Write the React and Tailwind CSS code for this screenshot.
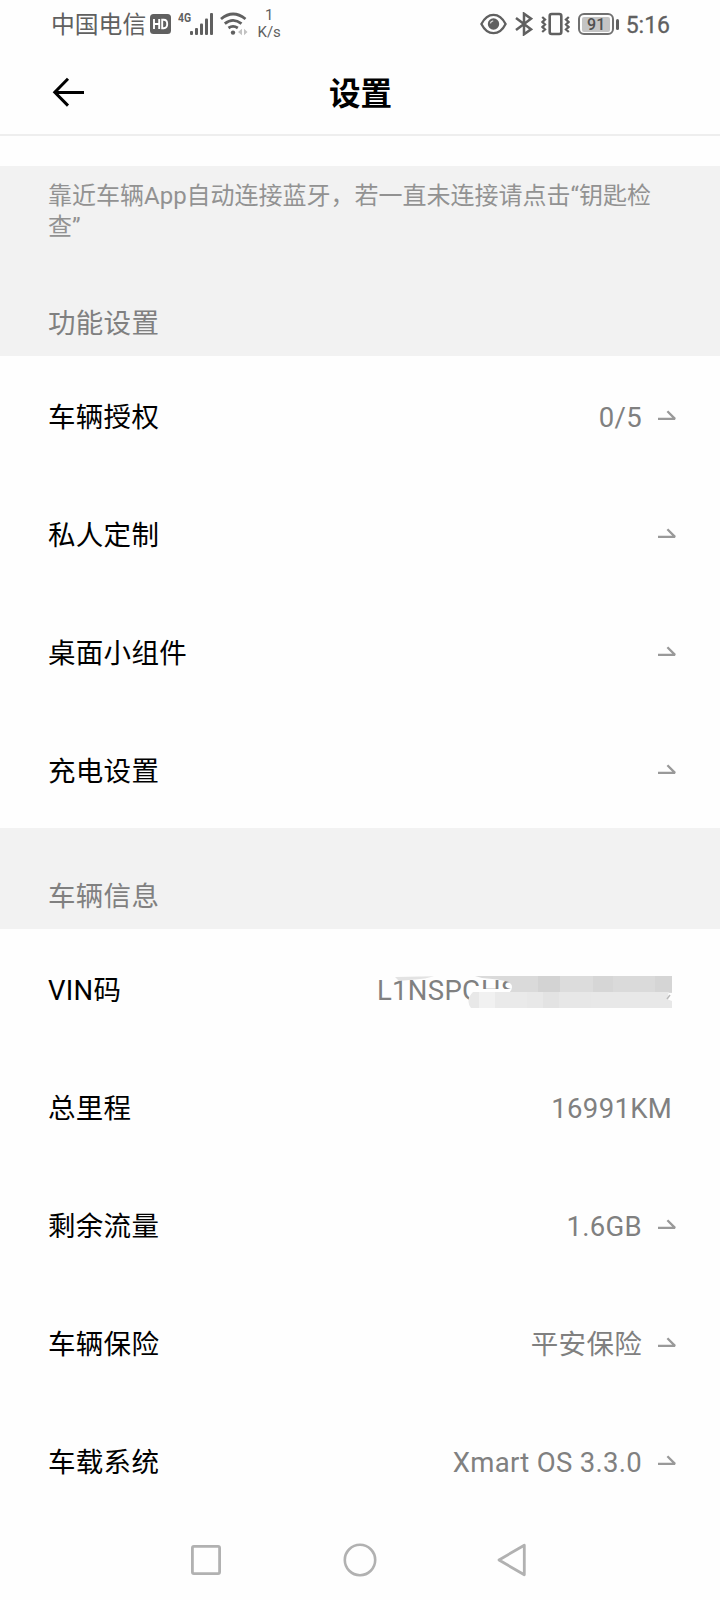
import React from "react";

const FONT = "font-['Roboto','Noto_Sans_CJK_SC',sans-serif]";

function HalfArrow() {
  return (
    <svg className="ml-[15px] h-[18px] w-[20px] shrink-0" viewBox="0 0 20 18" fill="none" stroke="#999" strokeWidth="2.3">
      <path d="M1 9.9H18L10.4 2.3" strokeLinejoin="bevel" />
    </svg>
  );
}

function Row({ label, value, arrow, children }) {
  return (
    <div className={"flex h-[118px] items-center justify-between pt-[5px] pl-12 " + (arrow ? "pr-[43px]" : "pr-12")}>
      <span className="text-[27.5px] leading-[40px] tracking-[0.3px] text-black">{label}</span>
      <div className="flex items-center text-[27.5px] leading-[40px] tracking-[0.3px] text-[#808080]">
        {value && <span>{value}</span>}
        {children}
        {arrow && <HalfArrow />}
      </div>
    </div>
  );
}

function MaskedVin() {
  return (
    <div className="relative h-10 w-[295px]">
      <span>L1NSPGHS</span>
      <svg className="absolute -top-[4px] left-0 h-12 w-[295px]" viewBox="0 0 295 48">
        <path d="M18 10L57 9.2L48 11.5L22 14Z" fill="#e3e3e3" />
        <path d="M93 22H137V37H95Q91 30 93 22Z" fill="#fefefe" />
        <path d="M98 9H295V26H132Q138 20 132 15Q122 12 105 11Z" fill="#dadada" />
        <rect x="161" y="9" width="22" height="16" fill="#d3d3d3" />
        <rect x="183" y="9" width="33" height="16" fill="#dcdcdc" />
        <rect x="216" y="9" width="20" height="16" fill="#d6d6d6" />
        <rect x="254" y="9" width="24" height="16" fill="#dadada" />
        <rect x="278" y="9" width="17" height="16" fill="#d5d5d5" />
        <path d="M96 25H292L290 32L295 34V41H94Q88 33 96 25Z" fill="#e8e8e8" />
        <rect x="102" y="25" width="16" height="16" fill="#f1f1f1" />
        <rect x="118" y="25" width="32" height="16" fill="#eaeaea" />
        <rect x="166" y="25" width="16" height="16" fill="#e3e3e3" />
        <rect x="182" y="25" width="32" height="16" fill="#e7e7e7" />
        <path d="M290 32L293 28" stroke="#bbb" strokeWidth="1.5" />
      </svg>
    </div>
  );
}

function StatusBar() {
  return (
    <div className="flex h-12 items-center justify-between pr-[50px] pl-[51px] text-[#606060]">
      <div className="flex items-center">
        <span className="mt-[2px] text-[23.8px] leading-[30px]">中国电信</span>
        <svg className="ml-[4px] h-[22px] w-[21px]" viewBox="0 0 21 22">
          <rect x="0" y="1" width="21" height="20" rx="3.5" fill="#606060" />
          <path d="M4 6V16M9.2 6V16M4 11H9.2M12.2 6.8V15.2H13.7Q17.2 15.2 17.2 11T13.7 6.8Z" fill="none" stroke="#fff" strokeWidth="1.9" />
        </svg>
        <span className="mb-[13px] ml-[7px] w-[12px] origin-left scale-x-80 text-[13px] leading-[12px] font-bold">4G</span>
        <svg className="h-[24px] w-[23px]" viewBox="0 0 23 24" fill="#606060">
          <rect x="0" y="19" width="3" height="4" rx="1" />
          <rect x="5" y="16" width="3" height="7" rx="1" />
          <rect x="10" y="11.5" width="3" height="11.5" rx="1" />
          <rect x="15" y="6.5" width="3" height="16.5" rx="1" />
          <rect x="20" y="1" width="3" height="22" rx="1" />
        </svg>
        <svg className="ml-[7px] h-[24px] w-[28px]" viewBox="0 0 28 24" fill="none" stroke="#606060" strokeWidth="2.8">
          <path d="M1 7Q13 -3 25.5 7M4.8 11.7Q13 5 21.5 11.7M8.5 16Q13 12.8 17.8 16" />
          <circle cx="13" cy="20.6" r="2.2" fill="#606060" stroke="none" />
          <path d="M18 20L22 16.8V23.2ZM27.5 20L24 16.8V23.2Z" fill="#c2c2c2" stroke="none" />
        </svg>
        <div className="ml-[9px] flex w-[24px] flex-col items-center text-[15px] leading-[17.5px]">
          <span>1</span>
          <span>K/s</span>
        </div>
      </div>
      <div className="flex items-center">
        <svg className="h-[24px] w-[27px]" viewBox="0 0 27 24" fill="none" stroke="#606060" strokeWidth="2.3">
          <path d="M1.4 12Q6 2.8 13.5 2.8T25.6 12Q21 21.2 13.5 21.2T1.4 12Z" />
          <circle cx="13.5" cy="12" r="5.7" fill="#606060" stroke="none" />
          <path d="M10.4 11.3Q10.8 9.1 13.2 8.8" stroke="#ddd" strokeWidth="1.3" />
        </svg>
        <svg className="ml-[8px] h-[24px] w-[18px]" viewBox="0 0 18 24" fill="none" stroke="#606060" strokeWidth="2.5">
          <path d="M1 6L16 17.3L9 22.3V1.7L16 6.7L1 18" />
        </svg>
        <svg className="ml-[8px] h-[24px] w-[29px]" viewBox="0 0 29 24" fill="none" stroke="#606060" strokeWidth="2.6">
          <rect x="8.7" y="2" width="11.6" height="20" rx="2" />
          <path d="M1.2 5L4 7.5L1.5 10L4 12.5L1.5 15L4 17.5L1.2 20M27.8 5L25 7.5L27.5 10L25 12.5L27.5 15L25 17.5L27.8 20" strokeWidth="2.3" />
        </svg>
        <div className="ml-[8px] flex h-[22px] w-[36px] items-center justify-center rounded-[6px] border-2 border-[#707070] p-[2px]">
          <div className="flex h-[15px] w-[28px] items-center justify-center rounded-[2px] bg-[#c4c4c4] text-[16px] leading-[15px] font-medium text-[#505050]">91</div>
        </div>
        <span className="ml-[2px] h-[11px] w-[2.5px] rounded-sm bg-[#606060]" />
        <span className="mt-[3px] ml-[7px] text-[23px] leading-[28px] [-webkit-text-stroke:0.3px_#606060]">5:16</span>
      </div>
    </div>
  );
}

export default function App() {
  return (
    <div className={"flex h-[1600px] w-[720px] flex-col overflow-hidden bg-[#fefefe] " + FONT}>
      <StatusBar />
      <header className="flex h-[88px] items-center border-b-2 border-[#eee] pr-12 pl-[52px]">
        <svg className="mt-px h-[30px] w-[33px]" viewBox="0 0 33 30" fill="none" stroke="#000" strokeWidth="3">
          <path d="M32 15.5H3M16 1.8L2.8 15.2L16 28.6" />
        </svg>
        <h1 className="mt-[8px] mr-[36px] flex-1 text-center text-[31.5px] leading-[44px] font-bold text-black">设置</h1>
      </header>
      <div className="mt-[30px] flex h-[190px] flex-col justify-between bg-[#f2f2f2] px-12 pt-[15px] pb-[12px]">
        <p className="text-[24px] leading-[31px] text-[#929292]">
          靠近车辆App自动连接蓝牙，若一直未连接请点击“钥匙检<br />查”
        </p>
        <h2 className="text-[27.5px] leading-[40px] tracking-[0.3px] text-[#808080]">功能设置</h2>
      </div>
      <Row label="车辆授权" value="0/5" arrow />
      <Row label="私人定制" arrow />
      <Row label="桌面小组件" arrow />
      <Row label="充电设置" arrow />
      <div className="flex h-[101px] flex-col justify-end bg-[#f2f2f2] px-12 pb-[12px]">
        <h2 className="text-[27.5px] leading-[40px] tracking-[0.3px] text-[#808080]">车辆信息</h2>
      </div>
      <Row label="VIN码"><MaskedVin /></Row>
      <Row label="总里程" value="16991KM" />
      <Row label="剩余流量" value="1.6GB" arrow />
      <Row label="车辆保险" value="平安保险" arrow />
      <Row label="车载系统" value="Xmart OS 3.3.0" arrow />
      <nav className="flex h-[81px] items-center justify-between pr-[193px] pl-[190px]">
        <svg className="h-[34px] w-[32px]" viewBox="0 0 32 34" fill="none" stroke="#b1b1b1" strokeWidth="2.8">
          <rect x="2.4" y="3.4" width="27.2" height="27.2" rx="1.5" />
        </svg>
        <svg className="h-[34px] w-[34px]" viewBox="0 0 34 34" fill="none" stroke="#b1b1b1" strokeWidth="2.6">
          <circle cx="17" cy="17" r="15.2" />
        </svg>
        <svg className="h-[34px] w-[30px]" viewBox="0 0 30 34" fill="none" stroke="#b1b1b1" strokeWidth="2.8" strokeLinejoin="round">
          <path d="M27.3 2.2V31.8L2 17Z" />
        </svg>
      </nav>
    </div>
  );
}
